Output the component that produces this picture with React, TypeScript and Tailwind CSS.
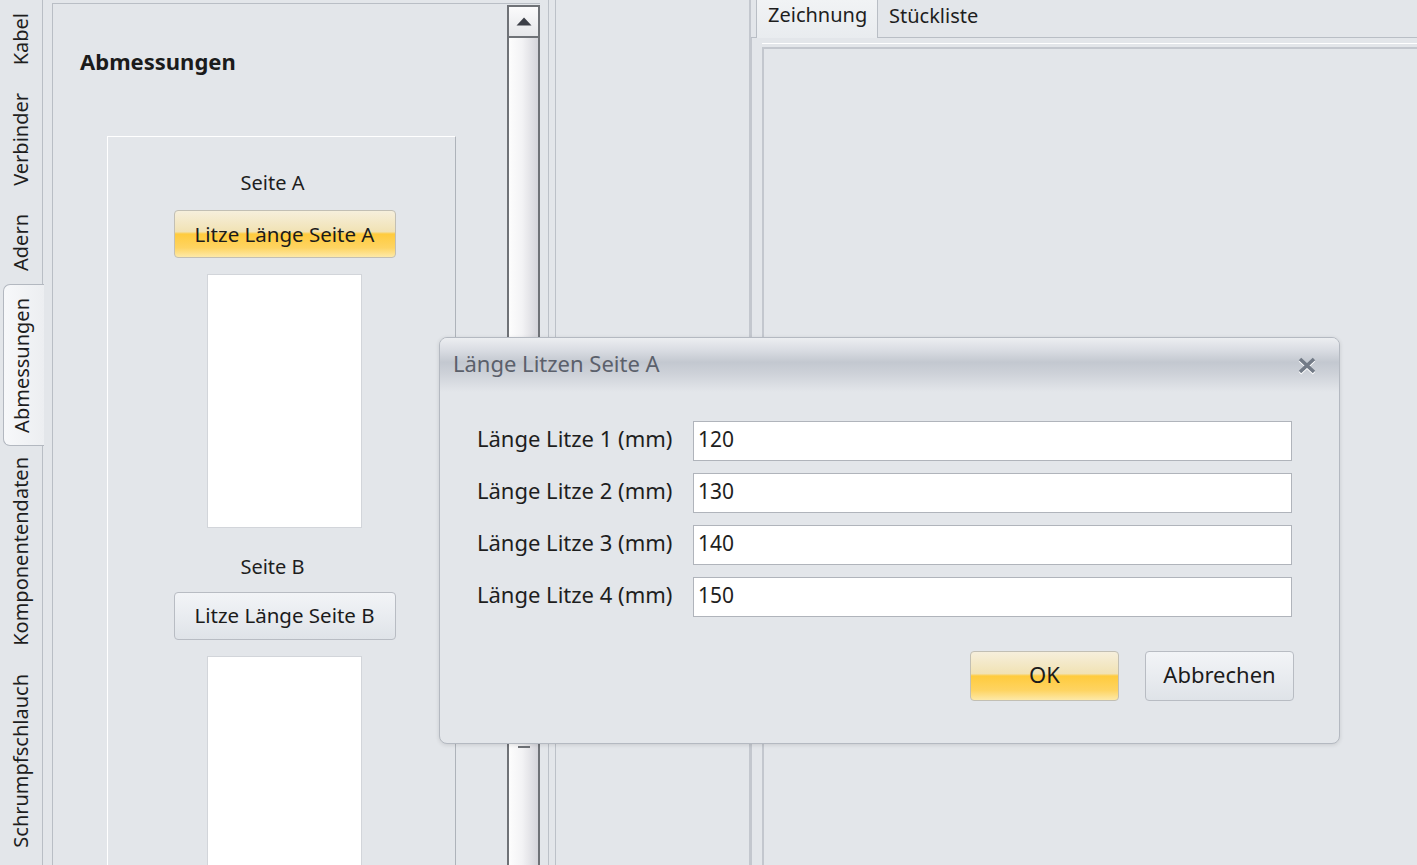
import React from 'react';

const font = "font-['Segoe_UI','Noto_Sans',sans-serif]";

const SIDE_TABS = [
  { label: 'Kabel', h: 'h-[78px]' },
  { label: 'Verbinder', h: 'h-[122px]' },
  { label: 'Adern', h: 'h-[84px]' },
  { label: 'Abmessungen', h: 'h-[162px]', active: true },
  { label: 'Komponentendaten', h: 'h-[210px]' },
  { label: 'Schrumpfschlauch', h: 'h-[209px]' },
];

const ROWS = [
  { label: 'Länge Litze 1 (mm)', value: '120' },
  { label: 'Länge Litze 2 (mm)', value: '130' },
  { label: 'Länge Litze 3 (mm)', value: '140' },
  { label: 'Länge Litze 4 (mm)', value: '150' },
];

// yellow "default" office button vs. plain grey one
const yellowBtn =
  'rounded-[4px] border border-[#c2bfb4] bg-[linear-gradient(to_bottom,#f6efdc_0%,#f1e2b4_45%,#ffcb3d_50%,#fed462_80%,#fde9a8_100%)] text-[#1b1b1b]';
const greyBtn =
  'rounded-[4px] border border-[#b8bcc3] bg-[linear-gradient(to_bottom,#f2f4f7_0%,#e9ecf0_50%,#dfe3e8_100%)] text-[#1b1b1b]';

function SideTab({ label, h, active }: { label: string; h: string; active?: boolean }) {
  return (
    <div
      className={`${h} flex items-center justify-center ${
        active
          ? 'ml-[3px] w-[41px] rounded-l-[7px] border border-r-0 border-[#b3b8c0] bg-[linear-gradient(to_right,#f7f8fa,#eceef1)]'
          : 'w-[43px] border-r border-[#b9bec5] pl-[3px]'
      }`}
    >
      <span className="[writing-mode:vertical-rl] rotate-180 text-[20px] leading-none text-[#1e1e1e] pl-[4px]">{label}</span>
    </div>
  );
}

function CloseIcon() {
  return (
    <svg width="20" height="19" viewBox="0 0 20 19">
      <path d="M3 3 L17 16 M17 3 L3 16" stroke="#ffffff" strokeWidth="3.6" transform="translate(0 1.2)" />
      <path d="M3 3 L17 16 M17 3 L3 16" stroke="#737b87" strokeWidth="3.6" />
    </svg>
  );
}

export default function App() {
  return (
    <div className={`relative flex h-[865px] w-[1417px] overflow-hidden bg-[#e3e6ea] ${font}`}>
      {/* vertical tab strip */}
      <div className="flex w-[44px] flex-col">
        {SIDE_TABS.map(t => (
          <SideTab key={t.label} {...t} />
        ))}
      </div>

      {/* left panel */}
      <div className="ml-[8px] mt-[3px] flex w-[488px] border-l border-t border-[#b9bec5]">
        <div className="flex flex-1 flex-col">
          <div className="pl-[27px] pt-[43px] text-[22px] font-bold leading-[28px] text-[#1b1b1b]">Abmessungen</div>
          <div className="ml-[54px] mt-[61px] flex w-[349px] flex-1 flex-col items-center border-l border-t border-l-white border-t-white border-r border-r-[#aeb3ba] pl-[6px] text-[20px] text-[#1e1e1e]">
            <div className="mr-[24px] mt-[33px] leading-[26px]">Seite A</div>
            <div className={`mt-[14px] flex h-[48px] w-[222px] items-center justify-center pt-[1px] text-[20.5px] leading-none ${yellowBtn}`}>
              Litze Länge Seite A
            </div>
            <div className="mt-[16px] h-[254px] w-[155px] border border-[#d2d5da] bg-white" />
            <div className="mr-[24px] mt-[26px] leading-[26px]">Seite B</div>
            <div className={`mt-[12px] flex h-[48px] w-[222px] items-center justify-center pb-[1px] text-[20.5px] leading-none ${greyBtn}`}>
              Litze Länge Seite B
            </div>
            <div className="mt-[16px] h-[240px] w-[155px] shrink-0 border border-[#d2d5da] bg-white" />
          </div>
        </div>
        {/* scrollbar */}
        <div className="mt-[1px] flex w-[33px] flex-col border-x-2 border-[#6f7277]">
          <div className="flex h-[33px] items-center justify-center border-b-2 border-t-2 border-[#6f7277] bg-[linear-gradient(to_bottom,#fbfbfc,#e6e7ea)]">
            <svg width="16" height="9" viewBox="0 0 16 9">
              <path d="M8 0.5 L15.5 8.5 L0.5 8.5 Z" fill="#3c3f47" />
            </svg>
          </div>
          <div className="flex flex-1 flex-col items-center bg-[linear-gradient(to_right,#fdfdfd_0%,#f3f3f5_45%,#d5d5db_100%)]">
            <div className="mt-[708px] h-[2px] w-[12px] bg-[#6f7277]" />
          </div>
        </div>
      </div>

      {/* splitter */}
      <div className="ml-[8px] w-[8px] border-x border-[#bcc1c8]" />
      <div className="w-[193px]" />

      {/* right document area */}
      <div className="flex flex-1 flex-col border-l-2 border-[#c3c7ce]">
        <div className="flex h-[38px] items-end">
          <div className="h-full w-[5px] border-b border-[#b9bec5]" />
          <div className="flex h-full w-[122px] items-start border-x border-[#b9bec5] bg-[linear-gradient(to_bottom,#f1f3f5,#e9ecef)] pl-[11px] text-[20px] text-[#1e1e1e]">
            Zeichnung
          </div>
          <div className="flex h-full flex-1 items-start border-b border-[#b9bec5] pl-[11px] pt-[1px] text-[20px] text-[#1e1e1e]">
            Stückliste
          </div>
        </div>
        <div className="flex flex-1 flex-col border-l border-[#c3c7ce] pl-[10px] pt-[5px]">
          <div className="h-px bg-white" />
          <div className="mt-[3px] flex-1 border-l-2 border-t-2 border-[#c3c7ce]" />
        </div>
      </div>

      {/* modal dialog */}
      <div className="absolute left-[439px] top-[337px] flex h-[407px] w-[901px] flex-col overflow-hidden rounded-[8px] border border-[#b4b9c1] bg-[#e3e6ea] shadow-[0_1px_4px_rgba(0,0,0,0.12)]">
        <div className="flex h-[54px] items-center justify-between bg-[linear-gradient(to_bottom,#eceef1_0%,#dadde3_22%,#c3c8d0_45%,#cdd1d8_65%,#e3e6ea_100%)] pl-[13px] pr-[22px]">
          <span className="pb-[4px] text-[22px] text-[#5b606b]">Länge Litzen Seite A</span>
          <CloseIcon />
        </div>
        <div className="flex flex-col gap-[12px] pl-[37px] pt-[29px]">
          {ROWS.map(r => (
            <div key={r.label} className="flex items-center">
              <span className="w-[216px] pb-[7px] text-[22px] leading-none text-[#1e1e1e]">{r.label}</span>
              <div className="flex h-[40px] w-[599px] items-center border border-[#b0b4bb] bg-white pb-[2px] pl-[4px] text-[21px] text-[#1e1e1e]">
                {r.value}
              </div>
            </div>
          ))}
        </div>
        <div className="mt-[34px] flex justify-end gap-[26px] pr-[45px]">
          <div className={`flex h-[50px] w-[149px] items-center justify-center pb-[3px] text-[22px] ${yellowBtn}`}>OK</div>
          <div className={`flex h-[50px] w-[149px] items-center justify-center pb-[3px] text-[22px] ${greyBtn}`}>Abbrechen</div>
        </div>
      </div>
    </div>
  );
}
